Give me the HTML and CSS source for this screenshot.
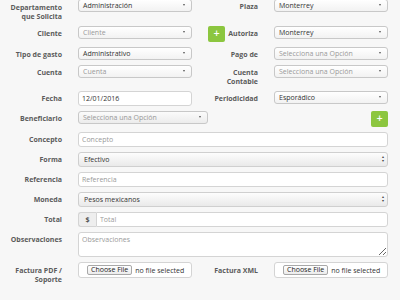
FILE: index.html
```html
<!DOCTYPE html>
<html lang="es">
<head>
    <meta charset="UTF-8">
    <meta name="viewport" content="width=device-width, initial-scale=1.0">
    <title>Solicitud de gasto</title>
    <link rel="stylesheet" href="styles.css">
</head>
<body>
    <form class="form">
        <div class="row">
            <label class="lbl first">Departamento<br>que Solicita</label>
            <div class="select">Administración</div>
            <label class="lbl">Plaza</label>
            <div class="select">Monterrey</div>
        </div>
        <div class="row">
            <label class="lbl">Cliente</label>
            <div class="select empty">Cliente</div>
            <div class="side">
                <button type="button" class="add">+</button>
                <label class="lbl">Autoriza</label>
            </div>
            <div class="select">Monterrey</div>
        </div>
        <div class="row">
            <label class="lbl">Tipo de gasto</label>
            <div class="select">Administrativo</div>
            <label class="lbl">Pago de</label>
            <div class="select empty">Selecciona una Opción</div>
        </div>
        <div class="row">
            <label class="lbl">Cuenta</label>
            <div class="select empty">Cuenta</div>
            <label class="lbl">Cuenta<br>Contable</label>
            <div class="select empty">Selecciona una Opción</div>
        </div>
        <div class="row">
            <label class="lbl">Fecha</label>
            <input class="input" type="text" value="12/01/2016">
            <label class="lbl">Periodicidad</label>
            <div class="select">Esporádico</div>
        </div>
        <div class="row wide">
            <label class="lbl">Beneficiario</label>
            <div class="split">
                <div class="select empty gray short">Selecciona una Opción</div>
                <button type="button" class="add">+</button>
            </div>
        </div>
        <div class="row wide">
            <label class="lbl">Concepto</label>
            <input class="input" type="text" placeholder="Concepto">
        </div>
        <div class="row wide">
            <label class="lbl">Forma</label>
            <div class="select native">Efectivo</div>
        </div>
        <div class="row wide">
            <label class="lbl">Referencia</label>
            <input class="input" type="text" placeholder="Referencia">
        </div>
        <div class="row wide">
            <label class="lbl">Moneda</label>
            <div class="select native">Pesos mexicanos</div>
        </div>
        <div class="row wide">
            <label class="lbl">Total</label>
            <div class="input-group">
                <span class="addon">$</span>
                <input class="input" type="text" placeholder="Total">
            </div>
        </div>
        <div class="row wide">
            <label class="lbl">Observaciones</label>
            <textarea class="input area" placeholder="Observaciones"></textarea>
        </div>
        <div class="row">
            <label class="lbl file-lbl">Factura PDF /<br>Soporte</label>
            <div class="file"><span class="file-btn">Choose File</span>no file selected</div>
            <label class="lbl file-lbl">Factura XML</label>
            <div class="file"><span class="file-btn">Choose File</span>no file selected</div>
        </div>
    </form>
</body>
</html>
```

FILE: styles.css
```css
body {
    margin: 0;
    background: #f7f7f7;
    font-family: 'Open Sans', 'DejaVu Sans', sans-serif;
    font-size: 7px;
    color: #333;
}

.form {
    display: flex;
    flex-direction: column;
    gap: 5px;
    margin-top: -1px;
    padding-right: 12px;
}

.row {
    display: grid;
    grid-template-columns: 62px 114px 50px 114px;
    column-gap: 16px;
    align-items: start;
}

.row.wide {
    grid-template-columns: 62px 1fr;
}

.lbl {
    display: block;
    text-align: right;
    font-weight: 700;
    color: #5b5b5b;
    line-height: 9px;
    padding-top: 3px;
    white-space: nowrap;
}

.lbl.first {
    padding-top: 4px;
}

.lbl.file-lbl {
    padding-top: 4px;
}

.side {
    display: flex;
    justify-content: space-between;
    align-items: flex-start;
}

.add {
    width: 17px;
    height: 16px;
    padding: 0;
    border: none;
    border-radius: 2px;
    background: #8cc63f;
    color: #fff;
    font-family: 'DejaVu Sans', sans-serif;
    font-size: 8px;
    font-weight: 700;
    line-height: 16px;
    cursor: pointer;
}

.select {
    position: relative;
    box-sizing: border-box;
    height: 13px;
    padding: 0 10px 0 4px;
    border: 1px solid #c8c8c8;
    border-radius: 3px;
    background: linear-gradient(#ffffff, #f2f2f2);
    line-height: 11px;
    color: #333;
    white-space: nowrap;
    overflow: hidden;
}

.select::after {
    content: '';
    position: absolute;
    right: 6px;
    top: 4px;
    border-left: 1.5px solid transparent;
    border-right: 1.5px solid transparent;
    border-top: 2.5px solid #555;
}

.select.empty {
    color: #999;
}

.select.gray {
    background: linear-gradient(#fbfbfb, #ececec);
}

.select.native {
    height: 15px;
    line-height: 13px;
    padding-left: 5px;
    background: linear-gradient(#fdfdfd, #e9e9e9);
    border-color: #cfcfcf;
}

.select.native::after {
    content: '\25B4\A\25BE';
    white-space: pre;
    border: none;
    right: 3px;
    top: 2px;
    font-size: 4px;
    line-height: 4px;
    color: #444;
}

.split {
    display: flex;
    justify-content: space-between;
    align-items: flex-start;
}

.select.short {
    width: 130px;
}

.input {
    box-sizing: border-box;
    width: 100%;
    height: 15px;
    margin: 0;
    padding: 0 3px;
    border: 1px solid #d4d4d4;
    border-radius: 3px;
    background: #fff;
    font-family: inherit;
    font-size: 7px;
    color: #333;
    outline: none;
}

.input::placeholder {
    color: #9a9a9a;
}

.input-group {
    display: flex;
}

.addon {
    box-sizing: border-box;
    width: 18px;
    height: 15px;
    flex-shrink: 0;
    border: 1px solid #d4d4d4;
    border-right: none;
    border-radius: 3px 0 0 3px;
    background: #eeeeee;
    text-align: center;
    line-height: 13px;
    font-weight: 700;
    color: #555;
}

.input-group .input {
    border-radius: 0 3px 3px 0;
}

.area {
    height: 25px;
    padding-top: 2px;
    resize: vertical;
    display: block;
}

.file {
    box-sizing: border-box;
    height: 16px;
    padding: 0 0 0 8px;
    border: 1px solid #d4d4d4;
    border-radius: 3px;
    background: #fff;
    display: flex;
    align-items: center;
    gap: 3px;
    color: #333;
    white-space: nowrap;
}

.file-btn {
    box-sizing: border-box;
    height: 10px;
    padding: 0 3px;
    border: 1px solid #a8a8a8;
    border-radius: 2px;
    background: linear-gradient(#ffffff, #ececec);
    line-height: 8px;
    color: #222;
}
```
